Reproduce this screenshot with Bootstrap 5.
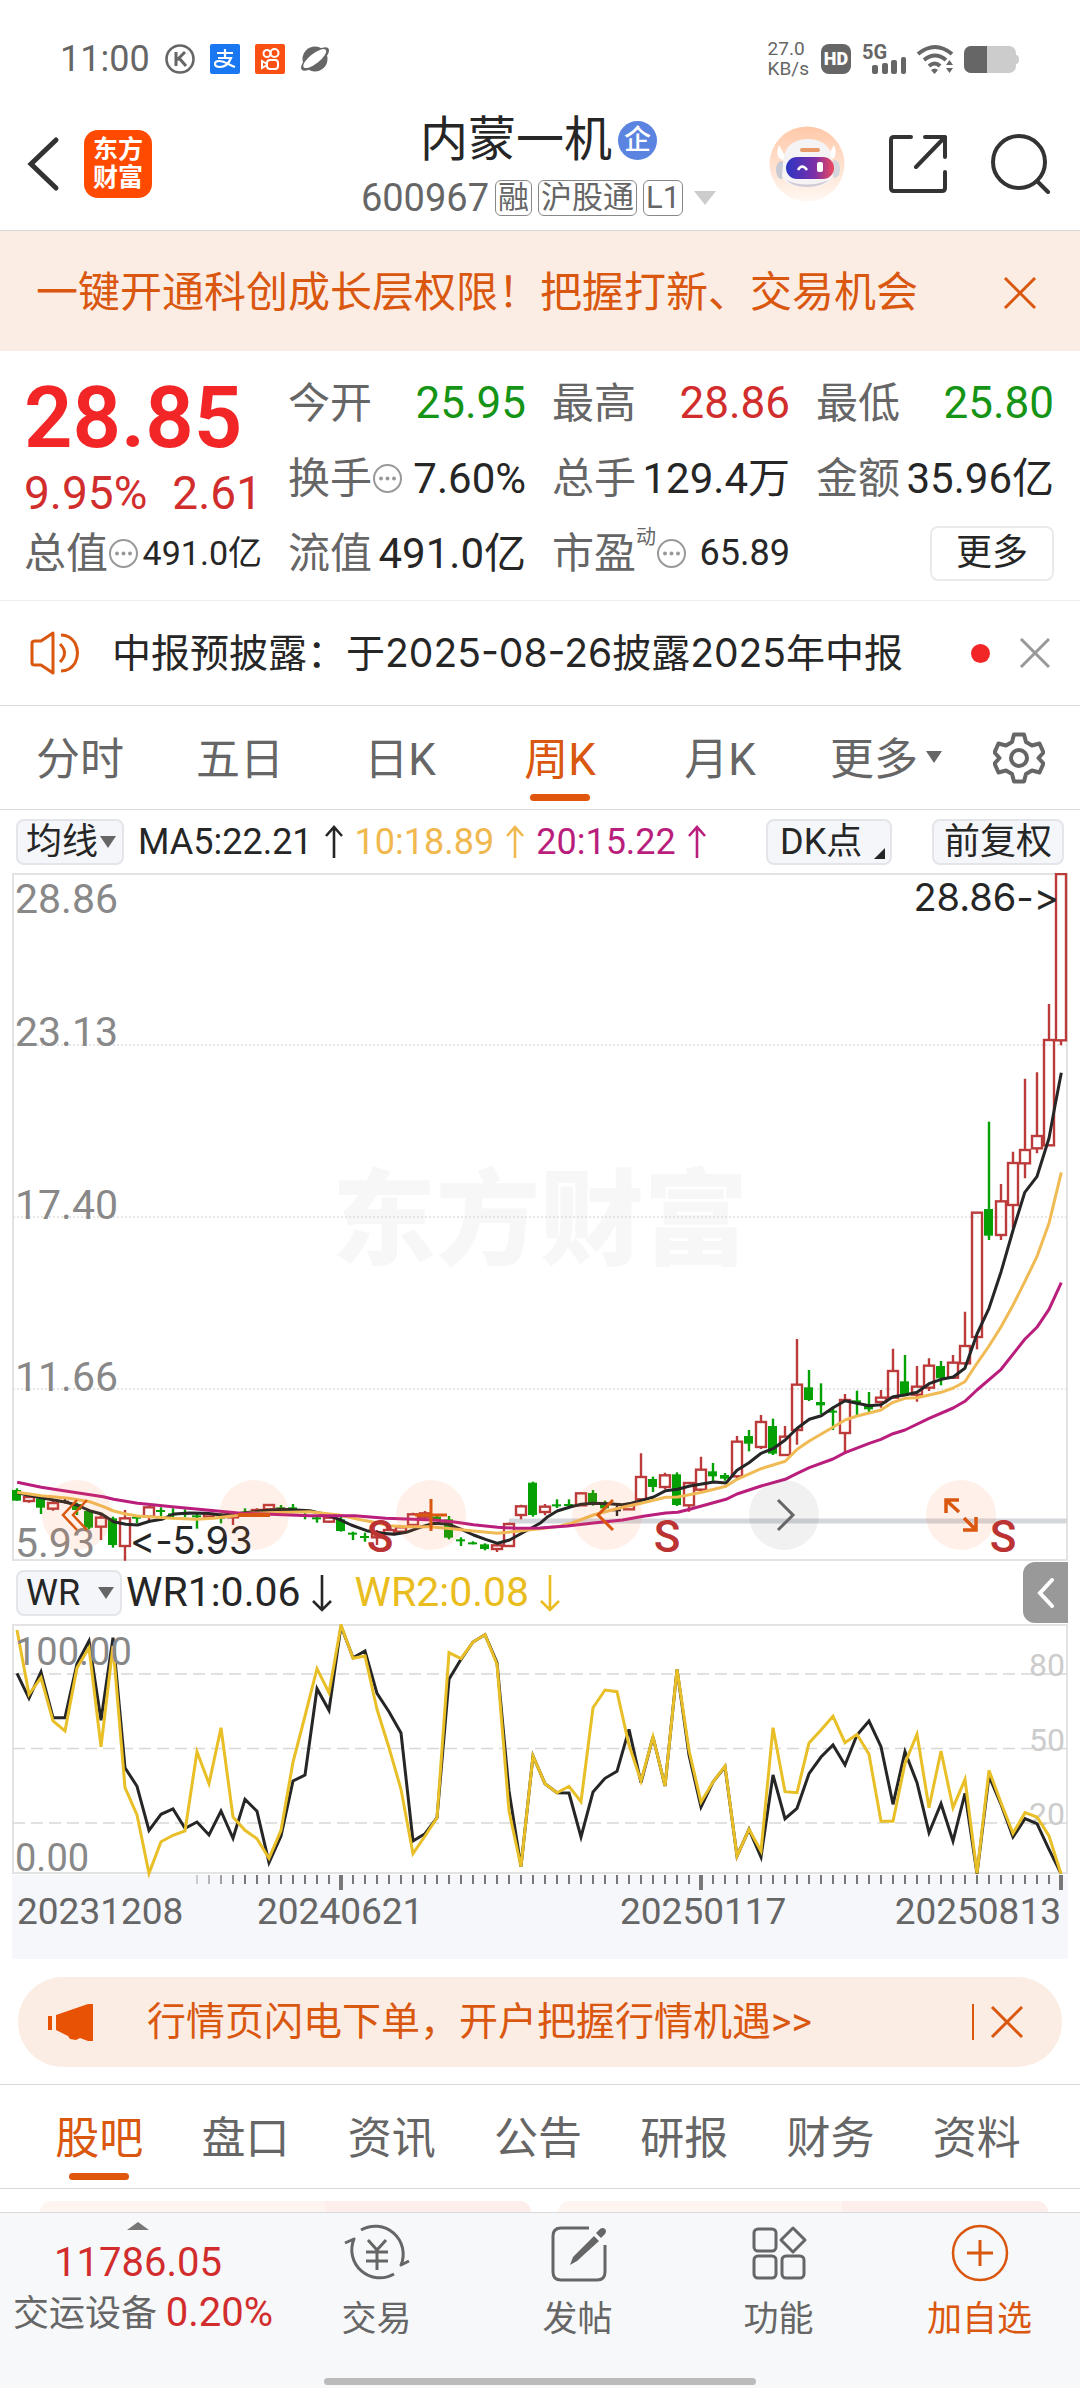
<!DOCTYPE html>
<html lang="zh-CN">
<head>
<meta charset="utf-8">
<meta name="viewport" content="width=device-width, initial-scale=1">
<title>内蒙一机 600967</title>
<link href="https://cdn.jsdelivr.net/npm/bootstrap@5.3.0/dist/css/bootstrap.min.css" rel="stylesheet">
<style>
:root{--ink:#262626;--dim:#666;--up:#d22d2d;--down:#159415;--brand:#d9570f;--line:#d9d9d9;--peach:#fcede4;--pale:#f7f8fa}
body{font-family:Roboto,"Noto Sans CJK SC",sans-serif;color:var(--ink);background:#fff}
svg{display:block;flex:none}
button{background:none;border:0;padding:0;color:inherit}
a{color:inherit;text-decoration:none}
.rule-b{border-bottom:1px solid var(--line)}
.fs-34{font-size:34px}.fs-36{font-size:36px}.fs-38{font-size:38px}.fs-40{font-size:40px}.fs-42{font-size:42px}.fs-44{font-size:44px}.fs-46{font-size:46px}
.c-dim{color:var(--dim)}.c-up{color:var(--up)}.c-down{color:var(--down)}.c-brand{color:var(--brand)}

.statusbar{padding:40px 60px 0;height:78px;color:var(--dim)}
.statusbar .left-icons{gap:15px}
.statusbar .net{font-size:19px;line-height:20px;margin-right:12px}
.hd-tag{background:#666;color:#fff;border-radius:8px;width:30px;height:30px;font-size:18px;line-height:30px;font-weight:900;text-align:center}

.topbar{padding:33px 29px 14px 26px}
.topbar .side{flex:1 1 0}
.topbar .tools-right{gap:44px}
.topbar h1{font-size:48px;line-height:58px;font-weight:400}
.applogo{width:68px;height:68px;border-radius:14px;background:#ff4a00;color:#fff;font-size:25px;line-height:28px;font-weight:700;padding:6px 0;text-align:center}
.firm{width:39px;height:39px;border-radius:50%;background:#5b84e0;color:#fff;font-size:27px;line-height:38px;font-weight:500;text-align:center;margin-left:6px}
.subline{line-height:36px;margin-top:11px;gap:6px;color:var(--dim)}
.subline .tagbox{border:1px solid #888;border-radius:6px;font-size:31px;line-height:34px;padding:0 2px}
.tri{border-left:11px solid transparent;border-right:11px solid transparent;border-top:14px solid #ccc;margin-left:5px}

.promo{background:var(--peach);padding:32px 43px 28px 36px;line-height:60px}

.quote{display:grid;grid-template-columns:repeat(4,minmax(0,1fr));column-gap:26px;padding:15px 26px 9px 24px;line-height:75px;border-bottom:1px solid #eee}
.quote .lead-cell{grid-row:span 2}
.bigprice{font-size:85px;line-height:104px;font-weight:600;color:#f22626}
.lead-cell .chg{line-height:46px}
.cell{display:flex;justify-content:space-between;white-space:nowrap;height:75px}
.cell .lab{color:var(--dim);display:flex;align-items:center}
.cell sup{font-size:20px;line-height:20px;top:0;align-self:flex-start;margin-top:11px}
.more-btn{border:2px solid #e9eaec;border-radius:8px;font-size:36px;line-height:51px;width:124px;align-self:center;margin-left:auto}

.notice{padding:26px 30px;line-height:52px;font-size:39px}
.notice a{font-family:Inter,"Noto Sans CJK SC",sans-serif;margin-left:30px}
.dot{width:19px;height:19px;border-radius:50%;background:#f22626}

.ktabs>*{flex:1 1 0;text-align:center;font-size:44px;line-height:56px;padding:26px 0 21px;color:var(--dim);position:relative;white-space:nowrap}
.ktabs>.gear{flex:0 0 120px;padding:0 0 0 33px;display:flex;align-items:center}
.ktabs>.menu{text-indent:12px}
.ktabs .on{color:var(--brand)}
.ktabs .on::after{content:"";position:absolute;left:50%;bottom:8px;width:60px;height:7px;margin-left:-30px;border-radius:4px;background:#e0560c}
.ktabs .caret{display:inline-block;border-left:8px solid transparent;border-right:8px solid transparent;border-top:12px solid var(--dim);vertical-align:12px;margin-left:8px}

.indrow{padding:0 16px;height:63px;font-size:36px}
.pick{position:relative;display:inline-block}
.pick select,.flatbtn{appearance:none;background:#f5f6f9;border:2px solid #e3e5ea;border-radius:8px;font-size:36px;line-height:42px;height:46px;padding:0 8px;color:var(--ink);display:block}
.pick::after{content:"";position:absolute;right:8px;top:17px;border-left:8px solid transparent;border-right:8px solid transparent;border-top:12px solid var(--dim);pointer-events:none}
.pick.corner::after{border-left:11px solid transparent;border-right:0;border-top:0;border-bottom:11px solid var(--ink);right:7px;top:29px}
.pick.corner select{padding-left:12px}
.w-ma{width:108px;margin-right:14px}.w-dk{width:126px}.w-wr{width:106px}
.flatbtn{width:132px;margin-left:40px}
.wrval{font-size:41px}
.wrval + svg{margin:0 20px 0 8px}
.fold{width:45px;height:61px;border-radius:12px 0 0 12px;background:#999;display:flex;align-items:center;justify-content:center}

.plot{margin:0 12px;position:relative}
.plot svg.full{width:100%;height:auto}
.plot text{font-family:Roboto,"Noto Sans CJK SC",sans-serif}
.plot .pin text{font-family:Inter,sans-serif;font-variant-ligatures:none;font-feature-settings:"calt" 0,"liga" 0}
.tools{position:absolute;left:30px;right:72px;bottom:11px;display:flex;justify-content:space-between}
.tools button{width:70px;height:70px;border-radius:50%;background:rgba(255,120,60,.11);display:flex;align-items:center;justify-content:center}
.tools button.off{background:rgba(80,80,80,.08)}

.pill{margin:18px 18px 17px;border-radius:45px;background:var(--peach);padding:20px 38px 20px 30px;line-height:50px;font-size:39px}
.pill a{margin-left:53px}
.pill .bar{border-left:2px solid var(--brand);height:36px}
.btabs{padding:0 30px 0 26px;border-top:1px solid var(--line)}
.btabs>*{font-size:44px}
.peek{padding:12px 32px 0 40px;gap:27px}
.peek div{height:11px;flex:1;border-radius:18px 18px 0 0;background:linear-gradient(90deg,#fef5f1 58%,#fdeeeb 58%)}
.dock{background:var(--pale);border-top:1px solid var(--line);color:var(--dim)}
.dock .idx{flex:0 0 276px;padding:9px 0 0;text-align:center;line-height:50px;white-space:nowrap}
.dock .idx i{display:block;width:0;margin:0 auto 8px;border-left:11px solid transparent;border-right:11px solid transparent;border-bottom:8px solid #777}
.dock .idx .fs-36{padding-left:10px}
.dock .act{flex:1;padding-top:10px;font-size:35px;line-height:44px;text-align:center}
.dock .act svg{margin:0 auto 15px}
.homebar{width:432px;height:7px;border-radius:4px;background:#bbb;margin:36px auto 0}
.dock-end{padding-bottom:3px}
</style>
<script src="https://cdn.jsdelivr.net/npm/bootstrap@5.3.0/dist/js/bootstrap.bundle.min.js"></script>
</head>
<body>

<div class="statusbar d-flex align-items-center">
  <div class="left-icons d-flex align-items-center">
  <span class="fs-36">11:00</span>
  <svg width="30" height="30" viewBox="0 0 30 30"><circle cx="15" cy="15" r="13.5" fill="none" stroke="#666" stroke-width="2.6"/><path d="M11 8v14M20 8l-8 8M14 14l7 8" fill="none" stroke="#666" stroke-width="3"/></svg>
  <svg width="30" height="30" viewBox="0 0 30 30"><rect width="30" height="30" rx="2" fill="#1a77f2"/><path d="M7 9h16M15 5v9M8 14h13c-2 5-6 9-11 9-7 0-6-6-1-6 6 0 10 4 16 6" fill="none" stroke="#fff" stroke-width="2.2"/></svg>
  <svg width="30" height="30" viewBox="0 0 30 30"><rect width="30" height="30" rx="2" fill="#fa5014"/><g fill="none" stroke="#fff" stroke-width="2"><circle cx="12" cy="9.500" r="3.500"/><circle cx="19.500" cy="9" r="4"/><rect x="12" y="16" width="11" height="9" rx="3"/><path d="M12 20l-5-3v7l5-3"/></g></svg>
  <svg width="30" height="30" viewBox="0 0 30 30"><circle cx="15" cy="15" r="12.500" fill="#666"/><g transform="rotate(-38 15 15)"><ellipse cx="15" cy="15" rx="17" ry="6.500" fill="#666"/><ellipse cx="15" cy="14.500" rx="14" ry="5" fill="#fff"/></g></svg>
  </div>
  <div class="ms-auto net">27.0<br>KB/s</div>
  <span class="hd-tag">HD</span>
  <svg width="46" height="32" viewBox="0 0 46 32" style="margin-left:11px"><text x="0" y="16" font-size="20" font-weight="700" fill="#666">5G</text><g fill="#666"><rect x="10" y="22" width="6" height="9" rx="2"/><rect x="20" y="20" width="6" height="11" rx="2"/><rect x="29" y="17" width="6" height="14" rx="2"/><rect x="39" y="14" width="5" height="17" rx="2"/></g></svg>
  <svg class="ms-2" width="40" height="30" viewBox="0 0 40 30"><g fill="none" stroke="#666" stroke-width="4"><path d="M2 10q17-14 34 0"/><path d="M8 16q11-9 22 0"/><path d="M13 22q6-5 11 0"/></g><path d="M15 26q4-3 7 0l-3.500 4zM30 21l3.500-5 3.500 5zM30 24h7l-3.500 5z" fill="#666"/></svg>
  <svg class="ms-2" width="56" height="27" viewBox="0 0 56 27"><rect x="0" width="52" height="27" rx="7" fill="#ccc"/><path d="M52 9q3 0 3 4.500t-3 4.500z" fill="#ccc"/><path d="M23 0H7a7 7 0 0 0-7 7v13a7 7 0 0 0 7 7h16z" fill="#666"/></svg>
</div>

<header class="topbar rule-b d-flex align-items-center">
  <div class="side d-flex align-items-center">
    <a href="#" aria-label="返回"><svg width="34" height="56" viewBox="0 0 34 56"><path d="M30 4L5 28l25 24" fill="none" stroke="#333" stroke-width="5" stroke-linecap="round"/></svg></a>
    <div class="applogo ms-4">东方<br>财富</div>
  </div>
  <div class="text-center">
    <div class="d-flex justify-content-center align-items-center"><h1 class="mb-0">内蒙一机</h1><span class="firm">企</span></div>
    <div class="subline d-flex align-items-center"><span class="fs-38">600967</span><span class="tagbox">融</span><span class="tagbox">沪股通</span><span class="tagbox">L1</span><span class="tri"></span></div>
  </div>
  <div class="side tools-right d-flex align-items-center justify-content-end">
    <button aria-label="助手"><svg width="76" height="76" viewBox="0 0 76 76"><defs><linearGradient id="sky" x2="0" y2="1"><stop offset="0" stop-color="#ffc8a8"/><stop offset="1" stop-color="#fff8f3"/></linearGradient><linearGradient id="visor"><stop offset="0" stop-color="#2c35c4"/><stop offset=".6" stop-color="#7c2fa8"/><stop offset="1" stop-color="#ee4a5c"/></linearGradient></defs><circle cx="38" cy="38" r="37.500" fill="url(#sky)"/><path d="M10 19q-6 15 9 16zM65 19q6 15-9 16z" fill="#fff"/><ellipse cx="12" cy="44" rx="5" ry="9" fill="#c9cbd4"/><ellipse cx="66" cy="43" rx="5" ry="9" fill="#d6d6de"/><path d="M14 38Q14 14 39 13Q64 14 63 38L64 50Q60 61 38 61Q16 61 13 50z" fill="#f6f3f5"/><path d="M17 54q20 9 43 0q-8 7-22 7t-21-7z" fill="#cfcbd4"/><rect x="31" y="22" width="20" height="4" rx="2" fill="#e89b68"/><rect x="17" y="31" width="48" height="22" rx="11" fill="url(#visor)"/><path d="M29 44q4-7 9 0" stroke="#fff" stroke-width="2.500" fill="none"/><rect x="48" y="36" width="6" height="10" rx="2" fill="#fff"/></svg></button>
    <button aria-label="分享"><svg width="58" height="58" viewBox="0 0 58 58"><path d="M22 2H5q-3 0-3 3v48q0 3 3 3h48q3 0 3-3V37M36 2h20v20M56 2L27 32" fill="none" stroke="#333" stroke-width="4" stroke-linecap="round" stroke-linejoin="round"/></svg></button>
    <button aria-label="搜索"><svg width="60" height="60" viewBox="0 0 60 60"><circle cx="28" cy="28" r="26" fill="none" stroke="#333" stroke-width="4"/><path d="M46 47l11 11" stroke="#333" stroke-width="4" stroke-linecap="round"/></svg></button>
  </div>
</header>

<div class="promo d-flex align-items-center justify-content-between fs-42 c-brand">
  <a href="#">一键开通科创成长层权限！把握打新、交易机会</a>
  <button aria-label="关闭"><svg width="34" height="34" viewBox="0 0 34 34"><path d="M2 2l30 30M32 2L2 32" stroke="#d9570f" stroke-width="3"/></svg></button>
</div>

<section class="quote fs-42">
  <div class="lead-cell"><div class="bigprice">28.85</div><div class="chg fs-46 c-up d-flex justify-content-between"><span>9.95%</span><span>2.61</span></div></div>
  <div class="cell"><span class="lab">今开</span><span class="fs-44 c-down">25.95</span></div>
  <div class="cell"><span class="lab">最高</span><span class="fs-44 c-up">28.86</span></div>
  <div class="cell"><span class="lab">最低</span><span class="fs-44 c-down">25.80</span></div>
  <div class="cell"><span class="lab">换手<svg width="31" height="31" viewBox="0 0 31 31"><use href="#more-dots"/></svg></span><span>7.60%</span></div>
  <div class="cell"><span class="lab">总手</span><span>129.4万</span></div>
  <div class="cell"><span class="lab">金额</span><span>35.96亿</span></div>
  <div class="cell"><span class="lab">总值<svg width="31" height="31" viewBox="0 0 31 31"><use href="#more-dots"/></svg></span><span class="fs-34">491.0亿</span></div>
  <div class="cell"><span class="lab">流值</span><span>491.0亿</span></div>
  <div class="cell"><span class="lab">市盈<sup>动</sup><svg width="31" height="31" viewBox="0 0 31 31"><g id="more-dots"><circle cx="15.500" cy="15.500" r="13.500" fill="none" stroke="#999" stroke-width="2"/><g fill="#999"><circle cx="9" cy="15.500" r="2"/><circle cx="15.500" cy="15.500" r="2"/><circle cx="22" cy="15.500" r="2"/></g></g></svg></span><span class="fs-36">65.89</span></div>
  <div class="cell"><button class="more-btn">更多</button></div>
</section>

<div class="notice rule-b d-flex align-items-center">
  <svg width="52" height="44" viewBox="0 0 52 44"><g fill="none" stroke="#d9570f" stroke-width="3" stroke-linejoin="round"><path d="M2 12q0-2 3-2h6L23 2v40L11 34H5q-3 0-3-2z"/><path d="M30 13q9 9 0 18"/><path d="M31 4q9 0 14 8q5 10 0 20q-5 8-14 8"/></g></svg>
  <a href="#" class="me-auto text-nowrap">中报预披露：于2025-08-26披露2025年中报</a>
  <span class="dot"></span>
  <button class="ms-4" aria-label="关闭"><svg width="36" height="30" viewBox="-6 0 36 30"><path d="M1 1l28 28M29 1L1 29" stroke="#999" stroke-width="3"/></svg></button>
</div>

<nav class="ktabs rule-b d-flex">
  <a href="#">分时</a><a href="#">五日</a><a href="#">日K</a><a href="#" class="on">周K</a><a href="#">月K</a><a href="#" class="menu">更多<span class="caret"></span></a>
  <button class="gear" aria-label="设置"><svg width="52" height="52" viewBox="0 0 52 52"><path d="M21 2.500h10l2 7.500 6 3.500 7.500-2 4 9-5 5.500 0 0 5 5.500-4 9-7.500-2-6 3.500-2 7.500H21l-2-7.500-6-3.500-7.500 2-4-9 5-5.500-5-5.500 4-9 7.500 2 6-3.500z" fill="none" stroke="#666" stroke-width="4" stroke-linejoin="round"/><circle cx="26" cy="26" r="8" fill="none" stroke="#666" stroke-width="4"/></svg></button>
</nav>

<div class="indrow d-flex align-items-center">
  <span class="pick w-ma"><select class="w-100" aria-label="均线"><option>均线</option></select></span>
  <span>MA5:22.21</span><svg class="mx-2" width="26" height="34" viewBox="0 0 26 34"><path d="M13 33V3M5 11l8-9 8 9" fill="none" stroke="#262626" stroke-width="2.600"/></svg>
  <span style="color:#f0b84e">10:18.89</span><svg class="mx-2" width="26" height="34" viewBox="0 0 26 34"><path d="M13 33V3M5 11l8-9 8 9" fill="none" stroke="#f0b84e" stroke-width="2.600"/></svg>
  <span style="color:#ba1e7c">20:15.22</span><svg class="mx-2" width="26" height="34" viewBox="0 0 26 34"><path d="M13 33V3M5 11l8-9 8 9" fill="none" stroke="#ba1e7c" stroke-width="2.600"/></svg>
  <span class="pick corner w-dk ms-auto"><select class="w-100" aria-label="DK点"><option>DK点</option></select></span>
  <button class="flatbtn text-nowrap">前复权</button>
</div>

<div class="plot">
  <svg class="full" id="kline" viewBox="0 0 1056 688">
    <text x="528" y="384" font-size="104" font-weight="900" fill="#f7f7f7" text-anchor="middle">东方财富</text>
    <path d="M1 1H1055V687H1z" fill="none" stroke="#e3e3e3" stroke-width="2"/>
    <path d="M1 172H1055M1 344H1055M1 516H1055" stroke="#dedede" stroke-width="1.500" stroke-dasharray="2 2"/>
    <path d="M497 648H1055" stroke="#d3d7dc" stroke-width="5"/>
    <g id="candles"></g><g id="averages"></g>
    <g font-size="41" fill="#888"><text x="3" y="40">28.86</text><text x="3" y="173">23.13</text><text x="3" y="346">17.40</text><text x="3" y="518">11.66</text><text x="3" y="684">5.93</text></g>
    <g class="pin" font-size="38" fill="#262626"><text x="1047" y="38" text-anchor="end">28.86-&gt;</text><text x="118" y="681">&lt;-5.93</text></g>
    <g font-size="44" font-weight="500" fill="#bb3333" text-anchor="middle"><text x="368" y="679">S</text><text x="655" y="679">S</text><text x="991" y="679">S</text></g>
  </svg>
  <div class="tools">
    <button aria-label="最左"><svg width="36" height="36" viewBox="0 0 36 36"><path d="M18 3L4 18l14 15M28 3L14 18l14 15" fill="none" stroke="#d9570f" stroke-width="2.500"/></svg></button>
    <button aria-label="缩小"><svg width="36" height="36" viewBox="0 0 36 36"><path d="M2 18h32" stroke="#d9570f" stroke-width="4"/></svg></button>
    <button aria-label="放大"><svg width="36" height="36" viewBox="0 0 36 36"><path d="M2 18h32M18 2v32" stroke="#d9570f" stroke-width="3"/></svg></button>
    <button aria-label="左移"><svg width="36" height="36" viewBox="0 0 36 36"><path d="M24 3L9 18l15 15" fill="none" stroke="#d9570f" stroke-width="3"/></svg></button>
    <button class="off" aria-label="右移"><svg width="36" height="36" viewBox="0 0 36 36"><path d="M12 3l15 15-15 15" fill="none" stroke="#666" stroke-width="3"/></svg></button>
    <button aria-label="全屏"><svg width="36" height="36" viewBox="0 0 36 36"><path d="M3 16V3h13M4 4l12 11M33 20v13H20M32 32L21 21" fill="none" stroke="#d9570f" stroke-width="3.500"/></svg></button>
  </div>
</div>

<div class="indrow d-flex align-items-center pe-0 me-2">
  <span class="pick w-wr me-1"><select class="w-100" aria-label="指标"><option>WR</option></select></span>
  <span class="wrval">WR1:0.06</span><svg width="26" height="38" viewBox="0 0 26 38"><path d="M13 1V35M4 27l9 9 9-9" fill="none" stroke="#262626" stroke-width="2.600"/></svg>
  <span class="wrval" style="color:#e9bd20">WR2:0.08</span><svg width="26" height="38" viewBox="0 0 26 38"><path d="M13 1V35M4 27l9 9 9-9" fill="none" stroke="#e9bd20" stroke-width="2.600"/></svg>
  <button class="fold ms-auto me-1" aria-label="收起"><svg width="18" height="30" viewBox="0 0 18 30"><path d="M15 2L3 15l12 13" fill="none" stroke="#fff" stroke-width="4" stroke-linecap="round"/></svg></button>
</div>

<div class="plot">
  <svg class="full" viewBox="0 0 1056 335">
    <rect y="251" width="1056" height="84" fill="#f6f7fa"/>
    <path d="M1 1H1055V249H1z" fill="none" stroke="#e3e3e3" stroke-width="2"/>
    <path d="M1 50H1055M1 124.500H1055M1 199H1055" stroke="#d8d8d8" stroke-width="1.500" stroke-dasharray="12 6"/>
    <g font-size="32" fill="#ccc" text-anchor="end"><text x="1053" y="52">80</text><text x="1053" y="127">50</text><text x="1053" y="201">20</text></g>
    <g id="wr"></g>
    <g font-size="38" fill="#888"><text x="3" y="41">100.00</text><text x="3" y="247">0.00</text></g>
    <g id="ticks" stroke="#777"></g>
    <g font-size="37" fill="#666"><text x="5" y="300">20231208</text><text x="245" y="300">20240621</text><text x="608" y="300">20250117</text><text x="1049" y="300" text-anchor="end">20250813</text></g>
  </svg>
</div>

<div class="pill d-flex align-items-center c-brand">
  <svg width="46" height="40" viewBox="0 0 46 40"><path d="M0 14h4v14H0zM8 13L40 2h5v37h-5l-8-3-4 2-6-1-2-3-6-3-6-3z" fill="#e85205"/></svg>
  <a href="#">行情页闪电下单，开户把握行情机遇&gt;&gt;</a>
  <span class="bar ms-auto me-3"></span>
  <button aria-label="关闭"><svg width="34" height="34" viewBox="0 0 34 34"><path d="M2 2l30 30M32 2L2 32" stroke="#d9570f" stroke-width="3"/></svg></button>
</div>

<nav class="ktabs btabs rule-b d-flex">
  <a href="#" class="on">股吧</a><a href="#">盘口</a><a href="#">资讯</a><a href="#">公告</a><a href="#">研报</a><a href="#">财务</a><a href="#">资料</a>
</nav>
<div class="peek d-flex"><div></div><div></div></div>

<footer class="dock">
  <div class="d-flex">
    <a href="#" class="idx"><i></i><div class="c-up fs-40">11786.05</div><div class="fs-36">交运设备 <span class="c-up fs-40">0.20%</span></div></a>
    <a href="#" class="act"><svg width="66" height="60" viewBox="0 0 66 60"><g fill="none" stroke="#666" stroke-width="3"><path d="M17 7A28 28 0 0 1 57 42l8-4M50 51A28 28 0 0 1 10 16l-9 4" stroke-linejoin="round"/><path d="M24 17l9 10 9-10M22 29h22M22 38h22M33 27v20"/></g></svg>交易</a>
    <a href="#" class="act"><svg width="60" height="60" viewBox="0 0 60 60"><path d="M41 5H13q-8 0-8 8v36q0 8 8 8h36q8 0 8-8V22" fill="none" stroke="#666" stroke-width="3"/><path d="M46 13l5 5-22 20-7 4 3-8zM48 10l4-4q3-2 5 0t0 5l-4 4z" fill="#666"/></svg>发帖</a>
    <a href="#" class="act"><svg width="60" height="60" viewBox="0 0 60 60"><g fill="none" stroke="#666" stroke-width="3" stroke-linejoin="round"><rect x="5" y="6" width="22" height="22" rx="4"/><rect x="5" y="33" width="22" height="22" rx="4"/><rect x="33" y="33" width="22" height="22" rx="4"/><path d="M44 5L56 17 44 29 32 17z"/></g></svg>功能</a>
    <a href="#" class="act c-brand"><svg width="60" height="60" viewBox="0 0 60 60"><circle cx="30" cy="30" r="27" fill="none" stroke="#d9570f" stroke-width="2.500"/><path d="M17 30h26M30 17v26" stroke="#d9570f" stroke-width="3"/></svg>加自选</a>
  </div>
  <div class="dock-end"><div class="homebar"></div></div>
</footer>

<script>
// Weekly bars: colour, high, body top, body bottom, low, in thirds of a unit below the base line.
const early = `g265,270,302,302 r285,291,303,308 g292,295,323,342 r300,309,326,332 k295,302,304,310 g308,312,330,345 g330,333,383,388 r345,353,380,420 g350,355,435,443 r330,355,438,482 g345,350,352,370 r318,322,350,365 g322,330,332,348 g325,340,344,352 g328,338,342,352 g340,346,349,386 r340,342,350,350 g340,350,353,370 r340,348,352,375 g325,335,338,345 r325,330,340,342 r312,315,328,330 g315,322,325,330 g312,322,325,330 g330,345,348,358 g345,352,356,368 r350,353,365,368 g350,358,393,395 g395,398,401,420 g398,408,412,425 r390,398,412,435 r385,390,402,405 r378,382,395,398 r338,343,375,378 r333,340,352,360 g343,350,360,362 g348,358,413,418 g412,418,422,438 g424,427,431,433 g430,433,447,451 r430,436,447,456 r368,372,438,440 r314,319,345,358 g245,248,345,350`.split(' ');
const late = `r792,800,816,826 g778,793,796,804 g778,792,795,804 r757,760,796,798 g750,759,795,797 g782,790,805,808 k795,808,811,828 r790,795,808,810 r640,711,778,780 g710,717,741,756 r698,706,741,748 g697,703,795,798 r726,729,796,815 r650,689,749,752 g669,694,709,725 g699,705,716,722 r588,605,709,715 g570,588,611,634 r525,546,621,627 g536,558,641,645 r558,590,645,648 r297,434,570,614 g390,442,480,483 g430,486,496,522 g500,512,516,570 r462,480,579,638 g452,481,490,525 g456,492,508,520 r450,473,486,503 r326,393,473,475 g345,424,466,468 r378,440,464,485 r355,377,443,453 g363,378,415,436 r345,368,413,416 r215,318,370,374 r-82,-82,291,328 g-355,-93,-13,0 r-168,-116,-15,0 r-265,-231,-105,-35 r-484,-270,-230,-185 r-503,-312,-275,-260 r-708,-600,-284,-282 r-1099,-1098,-599,-584`.split(' ');
const tint = {g:'#04a004', r:'#bb3a3a', k:'#262626'};
const X = i => 5 + 12 * i;
let out = '';
[[early, 1581, 0], [late, 1101, 44]].forEach(([rows, base, start]) => rows.forEach((row, n) => {
  const c = tint[row[0]], x = X(start + n);
  const [h, t, b, l] = row.slice(1).split(',').map(v => (base + +v) / 3);
  if (row[0] === 'r') {
    out += `<path d="M${x} ${h}V${t}M${x} ${b}V${l}" stroke="${c}" stroke-width="2.4"/><rect x="${x-5}" y="${t}" width="10" height="${b-t}" fill="none" stroke="${c}" stroke-width="2.4"/>`;
  } else {
    out += `<path d="M${x} ${h}V${l}" stroke="${c}" stroke-width="2.4"/><rect x="${x-5}" y="${t}" width="9" height="${Math.max(b-t,2)}" fill="${c}"/>`;
  }
}));
document.getElementById('candles').innerHTML = out;

const ma = {
 '#262626': ['50,278 120,293 185,305 223,315 260,332 295,342 330,365 365,373 400,375 435,364 470,358 505,342 550,339 600,340 645,345 700,340 760,332 820,328 900,332 940,342 985,358 1020,375 1065,392 1110,400 1145,403 1180,397 1220,382 1260,370 1300,372 1340,388 1375,405 1410,418 1445,430 1480,420 1515,400 1550,380','0,850 20,832 50,813 90,800 120,793 155,790 200,791 240,794 265,790 300,780 330,771 365,752 400,748 435,738 470,732 505,726 540,729 572,691 607,668 642,640 677,626 712,600 747,565 782,538 817,527 851,503 886,482 921,490 956,497 990,494 1025,470 1060,465 1095,457 1130,431 1165,418 1200,411 1234,385 1269,282 1304,205 1339,95 1374,-30 1408,-143 1443,-190 1478,-305 1495,-400 1514,-502'],
 '#f0bb55': ['50,277 120,287 200,295 260,305 300,320 330,333 365,342 400,348 435,350 500,355 570,358 620,355 680,347 720,340 785,338 900,335 985,345 1040,358 1095,368 1130,377 1180,380 1250,380 1320,387 1375,393 1445,400 1515,392','0,866 60,858 90,850 155,825 230,804 300,788 365,772 400,771 470,757 540,739 572,718 642,686 712,664 747,628 782,603 817,582 851,562 886,540 921,528 956,519 990,510 1025,487 1060,475 1095,473 1165,457 1200,444 1234,425 1269,370 1304,318 1339,260 1374,195 1408,125 1443,50 1478,-50 1514,-203'],
 '#ba1e7c': ['50,247 120,262 190,273 300,290 330,298 400,310 500,320 600,330 700,340 785,343 900,347 1030,347 1120,355 1200,358 1260,360 1320,366 1375,374 1445,382 1500,385','0,864 80,858 155,849 240,840 300,829 365,819 400,817 435,808 540,778 572,762 642,738 712,718 747,700 782,683 851,657 886,638 956,610 990,598 1025,581 1060,570 1130,535 1200,504 1234,484 1269,450 1339,388 1408,298 1443,262 1478,208 1514,128']
};
document.getElementById('averages').innerHTML = Object.entries(ma).map(([c, parts]) => {
  const pts = parts.flatMap((s, k) => s.split(' ').map(p => {
    const [x, y] = p.split(',').map(Number);
    return `${(x / 2.904 + (k ? 528 : -12)).toFixed(1)},${((y + (k ? 1101 : 1581)) / 3).toFixed(1)}`;
  }));
  return `<polyline points="${pts.join(' ')}" fill="none" stroke="${c}" stroke-width="3" stroke-linejoin="round"/>`;
}).join('');

const wr1 = [217,292,213,350,350,188,120,358,110,500,556,688,640,624,682,663,702,630,712,595,631,785,705,540,522,263,328,75,170,150,277,332,396,720,698,650,235,175,123,101,185,570,797,465,548,575,576,708,573,532,511,385,545,408,555,205,462,618,543,497,765,685,768,522,653,622,518,468,432,492,402,360,437,610,452,545,695,608,720,577,818,525,610,708,653,668,745,818];
const wr2 = [87,280,230,360,390,200,140,437,135,560,642,817,722,703,690,452,548,380,648,688,713,772,688,483,345,203,275,72,172,165,325,440,565,758,705,650,155,173,123,101,190,630,797,465,548,575,556,602,320,267,272,432,540,408,555,205,448,603,543,495,765,685,750,380,572,575,426,387,346,425,400,460,661,661,487,400,620,450,620,535,817,508,605,697,635,648,705,818];
document.getElementById('wr').innerHTML = [[wr1, '#262626'], [wr2, '#e9bf28']].map(([d, c]) =>
  `<polyline points="${d.map((v, i) => X(i) + ',' + ((v - 72) / 3 + 1).toFixed(1)).join(' ')}" fill="none" stroke="${c}" stroke-width="3"/>`).join('');

let marks = '';
for (let i = 15; i < 88; i++) {
  const big = i % 30 === 27;
  marks += `<path d="M${X(i)} 251v${big ? 15 : 9}" stroke-width="${big ? 4 : 2}" opacity="${Math.min(1, (i - 13) / 6)}"/>`;
}
document.getElementById('ticks').innerHTML = marks;
</script>
</body>
</html>
